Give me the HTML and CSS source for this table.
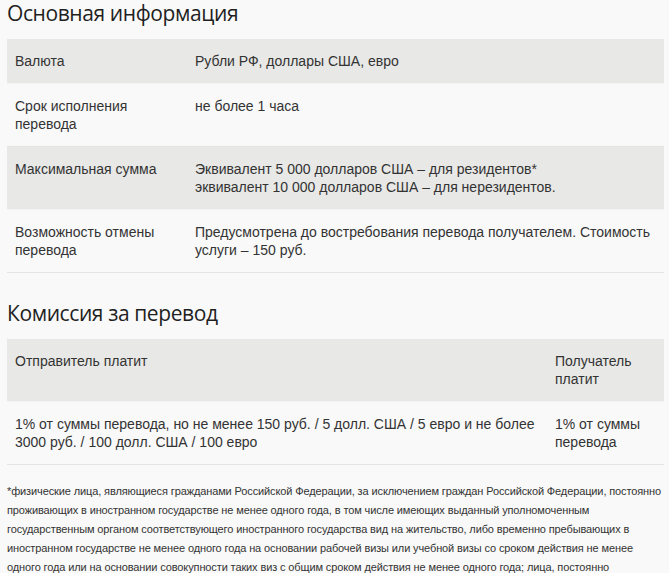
FILE: index.html
```html
<!DOCTYPE html>
<html lang="ru">
<head>
<meta charset="utf-8">
<link rel="stylesheet" href="styles.css">
</head>
<body>
<div class="page">
  <h2 class="title">Основная информация</h2>
  <table class="info">
    <colgroup><col class="c-label"><col></colgroup>
    <tr class="shade"><td>Валюта</td><td>Рубли РФ, доллары США, евро</td></tr>
    <tr><td>Срок исполнения<br>перевода</td><td>не более 1 часа</td></tr>
    <tr class="shade"><td>Максимальная сумма</td><td>Эквивалент 5 000 долларов США – для резидентов*<br>эквивалент 10 000 долларов США – для нерезидентов.</td></tr>
    <tr><td>Возможность отмены<br>перевода</td><td>Предусмотрена до востребования перевода получателем. Стоимость услуги – 150 руб.</td></tr>
  </table>

  <h2 class="title second">Комиссия за перевод</h2>
  <table class="info fee">
    <colgroup><col class="c-wide"><col></colgroup>
    <tr class="shade"><td>Отправитель платит</td><td>Получатель<br>платит</td></tr>
    <tr><td>1% от суммы перевода, но не менее 150 руб. / 5 долл. США / 5 евро и не более 3000 руб. / 100 долл. США / 100 евро</td><td>1% от суммы<br>перевода</td></tr>
  </table>

  <p class="note">*физические лица, являющиеся гражданами Российской Федерации, за исключением граждан Российской Федерации, постоянно проживающих в иностранном государстве не менее одного года, в том числе имеющих выданный уполномоченным государственным органом соответствующего иностранного государства вид на жительство, либо временно пребывающих в иностранном государстве не менее одного года на основании рабочей визы или учебной визы со сроком действия не менее одного года или на основании совокупности таких виз с общим сроком действия не менее одного года; лица, постоянно проживающие в Российской Федерации.</p>
</div>
</body>
</html>
```

FILE: styles.css
```css
html, body {
  margin: 0;
  padding: 0;
  background: #f9f9f9;
}
body {
  font-family: "Liberation Sans", Arial, sans-serif;
  color: #333;
  overflow: hidden;
}
.page {
  width: 657px;
  margin-left: 7px;
}
.title {
  margin: 0 0 14px;
  font-family: "Open Sans", "Liberation Sans", sans-serif;
  font-weight: 400;
  font-size: 21px;
  line-height: 24px;
  letter-spacing: -0.4px;
  color: #1f1f1f;
  padding-top: 1px;
}
.title.second {
  margin-top: 27px;
}
.info {
  width: 657px;
  border-collapse: collapse;
  table-layout: fixed;
  font-size: 14px;
  line-height: 18px;
}
.c-label { width: 180px; }
.c-wide { width: 540px; }
.info td {
  padding: 13px 8px;
  vertical-align: top;
  border-bottom: 1px solid #e4e4e2;
}
.info tr.shade td {
  background: #e8e8e6;
  border-bottom-color: #f3f3f3;
}
.note {
  margin: 17px 0 0;
  font-size: 11px;
  line-height: 19px;
  letter-spacing: -0.12px;
}
```
